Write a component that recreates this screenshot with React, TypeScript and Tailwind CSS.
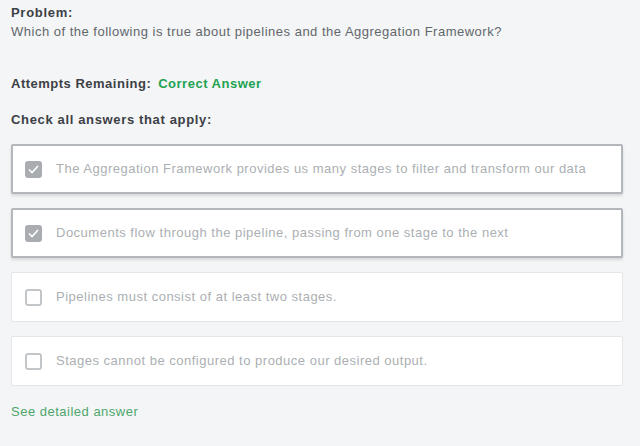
import React from 'react';

interface Choice {
  text: string;
  checked: boolean;
}

const choices: Choice[] = [
  { text: 'The Aggregation Framework provides us many stages to filter and transform our data', checked: true },
  { text: 'Documents flow through the pipeline, passing from one stage to the next', checked: true },
  { text: 'Pipelines must consist of at least two stages.', checked: false },
  { text: 'Stages cannot be configured to produce our desired output.', checked: false },
];

const Box: React.FC<{ checked: boolean }> = ({ checked }) =>
  checked ? (
    <span className="flex h-[17px] w-[17px] shrink-0 items-center justify-center rounded-[3px] bg-[#a9adb2]">
      <svg width="11" height="9" viewBox="0 0 11 9" fill="none">
        <path d="M1 4.5 L4 7.5 L10 1" stroke="#fff" strokeWidth="1.6" />
      </svg>
    </span>
  ) : (
    <span className="h-[17px] w-[17px] shrink-0 rounded-[3px] border-2 border-[#c3c6c9] bg-white" />
  );

export default function App() {
  return (
    <div className="h-[446px] w-[640px] bg-[#f4f5f7] px-[11px] pt-[3px] font-['Liberation_Sans',Arial,sans-serif] text-[13px] tracking-[0.5px]">
      <div className="font-bold leading-[19px] tracking-[0.7px] text-[#3c4045]">Problem:</div>
      <div className="leading-[19px] text-[#62676b]">
        Which of the following is true about pipelines and the Aggregation Framework?
      </div>

      <div className="mt-[33px] flex gap-[7px] font-bold leading-[19px] tracking-[0.5px]">
        <span className="text-[#3c4045]">Attempts Remaining:</span>
        <span className="text-[#22a251]">Correct Answer</span>
      </div>

      <div className="mt-[17px] font-bold leading-[19px] tracking-[0.65px] text-[#3c4045]">Check all answers that apply:</div>

      <div className="mt-[15px] flex w-[612px] flex-col gap-[14px]">
        {choices.map((c) => (
          <div
            key={c.text}
            className={
              c.checked
                ? 'flex h-[50px] items-center gap-[14px] rounded-[2px] border-2 border-[#b3b7bc] bg-white pl-[12px] shadow-[0_2px_3px_rgba(0,0,0,0.12)]'
                : 'flex h-[50px] items-center gap-[14px] rounded-[2px] border border-[#e3e5e8] bg-white pl-[13px]'
            }
          >
            <Box checked={c.checked} />
            <span className="text-[#abafb3]">{c.text}</span>
          </div>
        ))}
      </div>

      <div className="mt-[16px] leading-[19px] text-[#4ea66c]">See detailed answer</div>
    </div>
  );
}
